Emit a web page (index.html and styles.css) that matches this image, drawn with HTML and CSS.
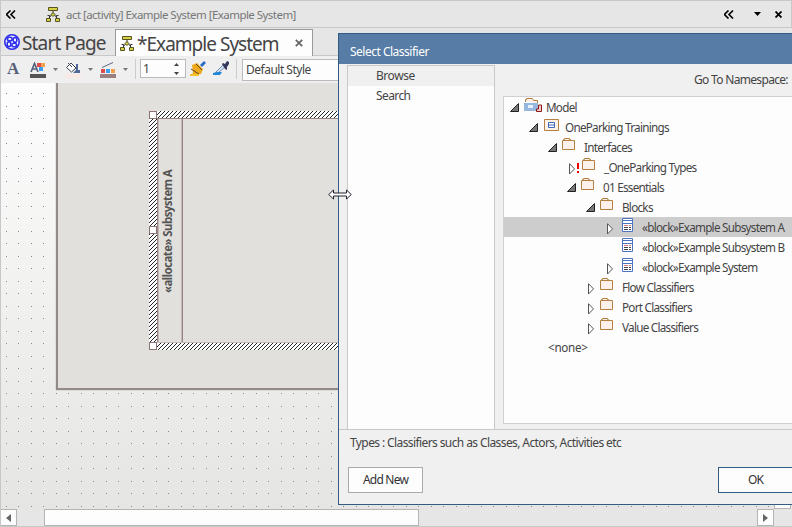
FILE: index.html
```html
<!DOCTYPE html>
<html lang="en">
<head>
<meta charset="utf-8">
<title>Example System</title>
<link rel="stylesheet" href="styles.css">
</head>
<body>
<svg class="defs" aria-hidden="true">
  <symbol id="activity" viewBox="0 0 14 16"><path d="M7 5v4M1.500 9.500h2v5M12.500 9.500h-2v5M3 12 7 7l4 5" fill="none" stroke="#333"/><path d="M2.500 1.500h9v3h-9zM.5 12.500h4v3h-4zM9.500 12.500h4v3h-4zM7 6.500l2 2-2 2-2-2z" fill="#d5d044" stroke="#555421"/></symbol>
  <symbol id="folder" viewBox="0 0 14 13"><path d="M.5 2.500h12v9H.500zM1.500 2.500v-1h1v-1h5v1h1v1" fill="#fdf1ec" stroke="#b5803f"/></symbol>
  <symbol id="block" viewBox="0 0 12 14"><path d="M.5.5h10v13H.500z" fill="#fff" stroke="#4c74bf"/><path d="M0 2.500h11M0 5.500h11" stroke="#4c74bf"/><path d="M2 7.500h4M7 7.500h2" stroke="#e87878"/><path d="M2 9.500h4M7 9.500h2M2 11.500h4M7 11.500h2" stroke="#444"/></symbol>
  <symbol id="open" viewBox="0 0 9 9"><path d="M8.500.5v8H.500z" fill="#777" stroke="#222"/></symbol>
  <symbol id="closed" viewBox="0 0 7 12"><path d="M.5.700v10.300L5.500 5.900z" fill="#fff" stroke="#555"/></symbol>
  <symbol id="chev" viewBox="0 0 10 9"><path d="M4.500.5l-4 4 4 4M9 .5l-4 4 4 4" fill="none" stroke="#000" stroke-width="1.600"/></symbol>
</svg>
<div class="app">
  <header class="caption">
    <svg class="collapse"><use href="#chev"/></svg>
    <svg class="act"><use href="#activity"/></svg>
    <span class="path">act [activity] Example System [Example System]</span>
    <svg class="chev2"><use href="#chev"/></svg>
    <svg class="drop" viewBox="0 0 7 4"><path d="M0 0h7L3.500 4z"/></svg>
    <svg class="close" viewBox="0 0 7 7"><path d="M.5.500l6 6M6.500.500l-6 6" stroke="#000" stroke-width="1.800"/></svg>
  </header>
  <nav class="tabs">
    <div class="tab start">
      <svg viewBox="0 0 16 16"><circle cx="8" cy="8" r="7.200" fill="#e9e9ff" stroke="#2d2dec" stroke-width="1.600"/><g fill="#fff" stroke="#2d2dec" stroke-width="1.500"><ellipse cx="5.800" cy="5" rx="2.400" ry="1.800"/><ellipse cx="11" cy="5.900" rx="1.800" ry="2.400"/><ellipse cx="5" cy="10.200" rx="1.800" ry="2.400"/><ellipse cx="10.200" cy="11" rx="2.400" ry="1.800"/></g></svg>
      <span>Start Page</span>
    </div>
    <div class="tab active">
      <svg class="act"><use href="#activity"/></svg>
      <span>*Example System</span>
      <svg class="x" viewBox="0 0 8 8"><path d="M.8.800l6.400 6.400M7.200.800L.8 7.200" stroke="#666" stroke-width="1.800"/></svg>
    </div>
  </nav>
  <div class="toolbar">
    <span class="font">A</span>
    <svg class="t2" width="17" height="18" viewBox="0 0 17 18"><path d="M1 10 4.500 1.500 8 10M2.500 7h4" fill="none" stroke="#55627f" stroke-width="1.700"/><path d="M7 1h4v4H7z" fill="#e04b4b"/><path d="M11 1h4v4h-4z" fill="#f3a14c"/><path d="M9 5h4v4H9z" fill="#3aa0f0"/><path d="M0 12h16v4H0z" fill="#555"/></svg>
    <svg class="dd" viewBox="0 0 5 3"><path d="M0 0h5L2.500 3z"/></svg>
    <svg class="t3" width="17" height="18" viewBox="0 0 17 18"><path d="M1.500 5.500 6 1l5 5-4.500 4zM3 1l4 4" fill="#fff" stroke="#3b4455"/><path d="M11 2h2v6h2v3H8l3-3z" fill="#53699b"/><path d="M0 12h16v4H0z" fill="#fbe9e5"/></svg>
    <svg class="dd" viewBox="0 0 5 3"><path d="M0 0h5L2.500 3z"/></svg>
    <svg class="t4" width="17" height="18" viewBox="0 0 17 18"><path d="M2 5.500 13 .5" stroke="#596684"/><path d="M1 7h4v4H1z" fill="#e04b4b"/><path d="M6 7h4v4H6z" fill="#3aa0f0"/><path d="M11 7h4v4h-4z" fill="#f3a14c"/><path d="M0 12h16v4H0z" fill="#9b8080"/></svg>
    <svg class="dd" viewBox="0 0 5 3"><path d="M0 0h5L2.500 3z"/></svg>
    <i class="sep s1"></i>
    <div class="spin"><span>1</span><svg width="5" height="12" viewBox="0 0 5 12"><path d="M0 3h5L2.500 0zM0 9h5l-2.500 3z" fill="#444"/></svg></div>
    <svg class="brush" width="16" height="16" viewBox="0 0 16 16"><path d="M10 4l4-4 2 2-4 4z" fill="#2869c5"/><path d="M2 4l5-2 6 6-2 5-10 2 2-3z" fill="#efa91c"/><path d="M6 3l6 6M1 8l8 5" stroke="#634617"/><path d="M0 13h9v2H0z" fill="#f5c22f"/></svg>
    <svg class="pick" width="17" height="15" viewBox="0 0 17 15"><path d="M3 11l7-7 2 2-7 6-3 1z" fill="#d5e7f6" stroke="#718cb0"/><path d="M9 3l1-1 2 1 2-3 2 1v2l-2 3v3l-2-1z" fill="#34385c"/><path d="M0 12l4-1h5l-2 3H0z" fill="#2387d8"/></svg>
    <i class="sep s2"></i>
    <div class="style">Default Style</div>
  </div>
  <main class="canvas">
    <div class="frame"></div>
    <svg class="partition" width="250" height="240" shape-rendering="crispEdges">
      <defs><pattern id="hatch" width="4" height="4" patternUnits="userSpaceOnUse"><path d="M0 0h4v4H0z" fill="#fff"/><path d="M3 0h1v1H3zM2 1h1v1H2zM1 2h1v1H1zM0 3h1v1H0z" fill="#222"/></pattern></defs>
      <path fill="url(#hatch)" d="M0 0h250v7H0zM0 0h8v239H0zM0 232h250v7H0z"/>
      <path d="M8 7.500h242M8.500 8v223M33.500 8v223" fill="none" stroke="#9a8484"/><path d="M8 231.500h242M9.500 8v223M32.500 8v223" stroke="#c4b9b7"/>
      <path d="M.5.500h7v7h-7zM.5 115.500h7v7h-7zM.5 231.500h7v7h-7z" fill="#fff" stroke="#8d7474"/>
    </svg>
    <span class="lane">«allocate» Subsystem A</span>
  </main>
  <footer class="scroll">
    <div class="sb left"><svg viewBox="0 0 5 8"><path d="M5 0v8L0 4z"/></svg></div>
    <div class="thumb"></div>
    <div class="sb right"><svg viewBox="0 0 5 8"><path d="M0 0v8l5-4z"/></svg></div>
  </footer>
  <i class="vscroll"></i>

  <section class="dialog">
    <h1>Select Classifier</h1>
    <div class="panes">
      <div class="modes"><div class="sel">Browse</div><div>Search</div></div>
      <div class="browser">
        <div class="ns">Go To Namespace:</div>
        <div class="tree">
          <div class="row l0"><i><svg class="o"><use href="#open"/></svg></i><b><svg class="model" width="20" height="16" viewBox="0 0 20 16"><path d="M1.500 5V2.500h1v-1h6l1 2h4V6" fill="#fdf1ec" stroke="#b5803f"/><path d="M0 6h14v8H0z" fill="#96b8df"/><path d="M4 8h5v3H4z" fill="#e8f2fc"/><path d="M17.500 8v6.500h-5V12h2V8z" fill="#f6d0cc" stroke="#8c1717"/></svg></b><span>Model</span></div>
          <div class="row l1"><i><svg class="o"><use href="#open"/></svg></i><b><svg class="pkg" width="15" height="12" viewBox="0 0 15 12"><path d="M.5.500h14v11H.500z" fill="#fdf1e8" stroke="#b5803f"/><path d="M4.500 3.500h6v5h-6zM5 6h5" fill="#fff" stroke="#3f68bc"/></svg></b><span>OneParking Trainings</span></div>
          <div class="row l2"><i><svg class="o"><use href="#open"/></svg></i><b><svg class="f"><use href="#folder"/></svg></b><span>Interfaces</span></div>
          <div class="row l3 types"><i><svg class="c"><use href="#closed"/></svg><svg class="warn" width="2" height="10" viewBox="0 0 2 10"><path d="M0 0h2v6H0zM0 8h2v2H0z" fill="#f00000"/></svg></i><b><svg class="f"><use href="#folder"/></svg></b><span>_OneParking Types</span></div>
          <div class="row l3"><i><svg class="o"><use href="#open"/></svg></i><b><svg class="f"><use href="#folder"/></svg></b><span>01 Essentials</span></div>
          <div class="row l4"><i><svg class="o"><use href="#open"/></svg></i><b><svg class="f"><use href="#folder"/></svg></b><span>Blocks</span></div>
          <div class="row l5 hit"><i><svg class="c"><use href="#closed"/></svg></i><b><svg class="k"><use href="#block"/></svg></b><span>«block»Example Subsystem A</span></div>
          <div class="row l5"><i></i><b><svg class="k"><use href="#block"/></svg></b><span>«block»Example Subsystem B</span></div>
          <div class="row l5"><i><svg class="c"><use href="#closed"/></svg></i><b><svg class="k"><use href="#block"/></svg></b><span>«block»Example System</span></div>
          <div class="row l4"><i><svg class="c"><use href="#closed"/></svg></i><b><svg class="f"><use href="#folder"/></svg></b><span>Flow Classifiers</span></div>
          <div class="row l4"><i><svg class="c"><use href="#closed"/></svg></i><b><svg class="f"><use href="#folder"/></svg></b><span>Port Classifiers</span></div>
          <div class="row l4"><i><svg class="c"><use href="#closed"/></svg></i><b><svg class="f"><use href="#folder"/></svg></b><span>Value Classifiers</span></div>
          <div class="row none"><span>&lt;none&gt;</span></div>
        </div>
      </div>
    </div>
    <div class="types-note">Types : Classifiers such as Classes, Actors, Activities etc</div>
    <div class="buttons"><button>Add New</button><button class="ok">OK</button></div>
  </section>
  <svg class="cursor" width="24" height="11" viewBox="0 0 24 11"><path d="M.7 5.500 5.500 1v3h13V1l4.800 4.500L18.500 10V7h-13v3z" fill="#fff" stroke="#223"/></svg>
</div>
</body>
</html>
```
FILE: styles.css
```css
* { box-sizing: border-box; }
body { margin: 0; }
.defs { position: absolute; width: 0; height: 0; }
svg { display: block; flex: none; }
.app { position: relative; width: 792px; height: 527px; overflow: hidden; display: flex; flex-direction: column; background: #e6e6e6; font: 12px/20px "Noto Sans", sans-serif; color: #444; white-space: nowrap; }

.caption { height: 28px; flex: none; display: flex; align-items: center; border: 1px solid #c8c8c8; padding-left: 5px; }
.collapse, .chev2 { width: 10px; height: 9px; }
.act { width: 14px; height: 16px; }
.caption .act { margin-left: 30px; }
.path { margin: 2px 0 0 6px; width: 230px; color: #777; font-size: 11.5px; letter-spacing: -0.54px; }
.chev2 { margin-left: 428px; }
.drop { width: 7px; height: 4px; margin-left: 20px; }
.caption .close { width: 7px; height: 7px; margin-left: 14px; }

.tabs { height: 28px; flex: none; display: flex; border-left: 1px solid #c8c8c8; border-bottom: 1px solid #c8c8c8; font-size: 19px; }
.tab { display: flex; align-items: center; height: 28px; }
.tab span { padding-top: 2px; }
.start { width: 114px; padding-left: 3px; }
.start svg { width: 16px; height: 16px; }
.start span { margin-left: 2px; letter-spacing: -0.85px; }
.active { width: 198px; background: #fdfdfd; border: 1px solid #999; border-bottom: 0; padding-left: 4px; margin-top: 1px; height: 27px; }
.active span { margin-left: 3px; width: 142px; letter-spacing: -0.98px; }
.x { width: 8px; height: 8px; margin-left: 16px; }

.toolbar { height: 27px; flex: none; display: flex; align-items: center; background: #efefef; border-left: 1px solid #c8c8c8; padding: 0 0 2px 6px; }
.font { width: 23px; font: bold 17px/24px "Liberation Serif", serif; color: #56617a; }
.dd { width: 5px; height: 3px; margin: 1px 11px 0 6px; fill: #777; }
.t2, .t3, .t4 { margin-top: 5px; }
.t3, .t4 { margin-left: -4px; }
.sep { width: 1px; height: 20px; background: #ccc; }
.s1 { margin-left: -4px; }
.spin { width: 46px; height: 19px; margin-left: 4px; background: #fdfdfd; border: 1px solid #bbb; display: flex; align-items: center; justify-content: space-between; padding: 0 6px 0 2px; }
.brush { margin-left: 4px; }
.pick { margin-left: 7px; }
.s2 { margin-left: 6px; }
.style { width: 180px; height: 22px; margin: 2px 0 0 5px; background: #fdfdfd; border: 1px solid #bbb; padding-left: 3px; letter-spacing: -0.5px; }

.canvas { position: relative; flex: 1; overflow: hidden; border-left: 1px solid #c8c8c8; background: linear-gradient(#fdfdfd, #e5e5e3); }
.canvas::before { content: ""; position: absolute; inset: 0; background: conic-gradient(from 90deg at 24px 24px, #888 90deg, transparent 0) 6px -1px / 25px 25px, conic-gradient(from 90deg at 24px 24px, #888 90deg, transparent 0) 18px -1px / 25px 25px, conic-gradient(from 90deg at 24px 24px, #888 90deg, transparent 0) 6px 11px / 25px 25px, conic-gradient(from 90deg at 24px 24px, #888 90deg, transparent 0) 18px 11px / 25px 25px; }
.frame { position: absolute; left: 55px; top: -3px; width: 500px; height: 310px; background: #e1e0dc; border: 2px solid #928989; box-shadow: 0 0 1px #998888; }
.partition { position: absolute; left: 148px; top: 28px; }
.lane { position: absolute; left: 157px; top: 86px; width: 20px; height: 124px; writing-mode: vertical-rl; transform: rotate(180deg); font-size: 11.5px; font-weight: bold; letter-spacing: -0.58px; color: #555; }

.scroll { height: 18px; flex: none; display: flex; border-left: 1px solid #c8c8c8; border-bottom: 1px solid #c8c8c8; }
.sb { width: 17px; height: 17px; border: 1px solid #b5b5b5; background: #fdfdfd; display: grid; place-items: center; fill: #666; }
.sb svg { width: 5px; height: 8px; }
.sb.left { width: 16px; border-left: 0; }
.thumb { width: 375px; height: 17px; margin-left: 27px; border: 1px solid #b5b5b5; background: #fdfdfd; }
.sb.right { margin-left: 338px; }
.vscroll { position: absolute; left: 774px; top: 500px; width: 17px; height: 9px; background: #fdfdfd; border: 1px solid #b5b5b5; }

.dialog { position: absolute; left: 338px; top: 33px; width: 490px; height: 472px; display: flex; flex-direction: column; background: #f0f0f0; border: 1px solid #345b82; }
.dialog h1 { margin: 0; flex: none; height: 30px; padding: 9px 0 0 11px; background: #577ca6; color: #fff; font-size: 12px; font-weight: normal; line-height: 18px; letter-spacing: -0.5px; }
.panes { height: 366px; flex: none; padding: 1px 0 0 8px; display: flex; border-bottom: 1px solid #c8c8c8; }
.modes { width: 148px; flex: none; border: 1px solid #c8c8c8; border-bottom: 0; background: #fdfdfd; }
.modes div { height: 20px; padding-left: 28px; letter-spacing: -0.45px; }
.modes div + div { letter-spacing: -0.6px; }
.modes .sel { background: #f0f0f0; }
.browser { width: 330px; flex: none; margin-left: 8px; }
.ns { height: 31px; padding: 5px 0 0 191px; letter-spacing: -0.68px; }
.tree { height: 328px; border: 1px solid #d0d0d0; background: #fdfdfd; font-size: 11.7px; letter-spacing: -0.73px; }
.row { display: flex; height: 20px; padding-left: 6px; }
.row i { position: relative; width: 14px; flex: none; }
.row b { width: 22px; flex: none; }
.l1 { padding-left: 25px; }
.l2 { padding-left: 44px; }
.l3 { padding-left: 63px; }
.l4 { padding-left: 82px; }
.l5 { padding-left: 101px; }
.o { width: 9px; height: 9px; margin-top: 6px; }
.c { width: 7px; height: 12px; margin: 6px 0 0 2px; }
.f { width: 14px; height: 13px; margin-top: 1px; }
.k { width: 12px; height: 14px; margin: 1px 0 0 3px; }
.pkg { margin: 2px 0 0 1px; }
.hit { background: #cdcdcd; }
.l5 span { margin-left: 1px; }
.warn { position: absolute; left: 10px; top: 6px; }
.types i { width: 15px; }
.row.none { padding-left: 44px; letter-spacing: -0.3px; }
.types-note { height: 37px; flex: none; padding: 3px 0 0 11px; letter-spacing: -0.6px; }
.buttons { display: flex; padding-left: 9px; }
button { width: 75px; height: 26px; padding: 0; border: 1px solid #aaa; background: #fdfdfd; font: inherit; color: #333; letter-spacing: -0.8px; }
.ok { margin-left: 295px; border-color: #345b82; }
.cursor { position: absolute; left: 328px; top: 189px; }
```
